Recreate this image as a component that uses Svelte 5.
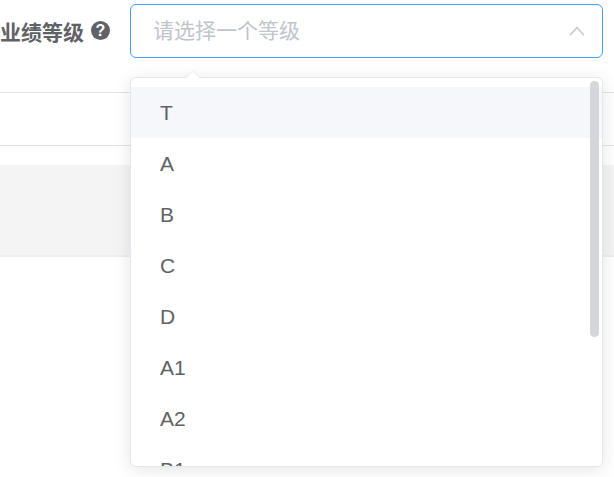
<script>
  const levels = ['T', 'A', 'B', 'C', 'D', 'A1', 'A2', 'B1'];
</script>

<div class="page">
  <div class="form-row">
    <div class="label">
      <span>业绩等级</span>
      <span class="help">?</span>
    </div>
    <div class="select">
      <span class="placeholder">请选择一个等级</span>
      <svg class="chevron" width="16" height="10" viewBox="0 0 16 10" fill="none">
        <path d="M1 9.2 8 1.6l7 7.6" stroke="#c0c4cc" stroke-width="1.4" />
      </svg>
    </div>
  </div>

  <div class="table">
    <div class="table-head"></div>
    <div class="table-body"></div>
  </div>

  <div class="dropdown">
    <div class="arrow"></div>
    <ul class="list">
      {#each levels as level, i}
        <li class:hover={i === 0}>{level}</li>
      {/each}
    </ul>
    <div class="thumb"></div>
  </div>
</div>

<style>
  :global(body) {
    margin: 0;
    background: #fff;
  }

  .page {
    position: relative;
    width: 614px;
    height: 477px;
    overflow: hidden;
    font-family: "Liberation Sans", "Noto Sans CJK SC", sans-serif;
    color: #606266;
  }

  .form-row {
    display: flex;
    align-items: center;
    height: 54px;
    padding-top: 4px;
  }

  .label {
    display: flex;
    align-items: center;
    width: 130px;
    gap: 7px;
    font-size: 21px;
    font-weight: 700;
    margin-top: -1px;
  }

  .help {
    width: 19px;
    height: 19px;
    border-radius: 50%;
    background: #606266;
    color: #fff;
    font-size: 16px;
    line-height: 19px;
    text-align: center;
  }

  .select {
    box-sizing: border-box;
    display: flex;
    align-items: center;
    justify-content: space-between;
    width: 473px;
    height: 54px;
    padding: 0 17px 0 22px;
    border: 1.5px solid #409eff;
    border-radius: 6px;
  }

  .placeholder {
    font-size: 21px;
    line-height: 24px;
    margin-top: -1px;
    color: #c0c4cc;
  }

  .table {
    margin-top: 34px;
  }

  .table-head {
    height: 52px;
    border-top: 1px solid #e1e2e8;
    border-bottom: 1px solid #e1e2e8;
  }

  .table-body {
    height: 90px;
    margin-top: 19px;
    background: #f4f4f5;
    border-bottom: 2px solid #ebeef5;
  }

  .dropdown {
    position: absolute;
    left: 130px;
    top: 77px;
    box-sizing: border-box;
    width: 473px;
    height: 390px;
    background: #fff;
    border: 1.5px solid #e4e7ed;
    border-radius: 6px;
    box-shadow: 0 3px 18px rgba(0, 0, 0, 0.1);
  }

  .arrow {
    position: absolute;
    left: 54px;
    top: -6px;
    width: 0;
    height: 0;
    border-left: 8px solid transparent;
    border-right: 8px solid transparent;
    border-bottom: 7px solid #fff;
    filter: drop-shadow(0 -1px 1px rgba(0, 0, 0, 0.06));
  }

  .list {
    height: 100%;
    box-sizing: border-box;
    margin: 0;
    padding: 8.5px 0 0;
    list-style: none;
    overflow: hidden;
    border-radius: 6px;
  }

  .list li {
    box-sizing: border-box;
    height: 51px;
    line-height: 51px;
    padding-left: 29px;
    font-size: 21px;
    color: #606266;
  }

  .list li.hover {
    background: #f5f7fa;
  }

  .thumb {
    position: absolute;
    left: 459px;
    top: 3px;
    width: 9px;
    height: 256px;
    border-radius: 5px;
    background: #d5d6da;
  }
</style>
